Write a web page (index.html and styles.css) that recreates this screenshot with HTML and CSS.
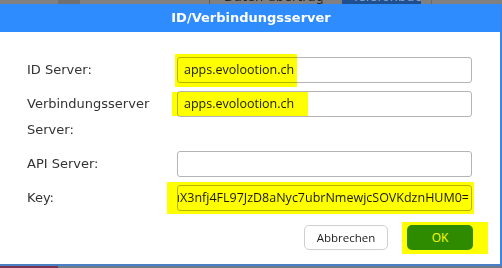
FILE: index.html
```html
<!DOCTYPE html>
<html>
<head>
    <title>ID/Verbindungsserver</title>
    <meta charset="utf-8">
    <link rel="stylesheet" href="styles.css">
</head>
<body>

    <div class="topbar">
        <div class="tab tab-first"></div>
        <div class="tab tab-dark"></div>
        <div class="tab tab-spacer"></div>
        <div class="tab tab-text"><span>Daten übertragen</span></div>
        <div class="tab tab-spacer2"></div>
        <div class="tab tab-active"><span>Telefonbuch</span></div>
        <div class="tab tab-last"></div>
    </div>

    <div class="dialog">
        <div class="dialog-title">ID/Verbindungsserver</div>
        <div class="dialog-body">
            <div class="form">
                <label>ID Server:</label>
                <div class="field">
                    <div class="input">apps.evolootion.ch</div>
                    <span class="mark mark-id"></span>
                </div>

                <label>Verbindungsserver Server:</label>
                <div class="field">
                    <div class="input">apps.evolootion.ch</div>
                    <span class="mark mark-conn"></span>
                </div>

                <label>API Server:</label>
                <div class="field">
                    <div class="input"></div>
                </div>

                <label>Key:</label>
                <div class="field">
                    <div class="input input-key"><span>QpuX3nfj4FL97JzD8aNyc7ubrNmewjcSOVKdznHUM0=</span></div>
                    <span class="mark mark-key"></span>
                </div>
            </div>

            <div class="actions">
                <button class="btn">Abbrechen</button>
                <div class="field">
                    <button class="btn btn-ok">OK</button>
                    <span class="mark mark-ok"></span>
                </div>
            </div>
        </div>
    </div>

    <div class="bottombar">
        <div class="bottom-left"></div>
    </div>

</body>
</html>
```

FILE: styles.css
```css
* {
    margin: 0;
    padding: 0;
    box-sizing: border-box;
}

body {
    background: #7f7f7f;
    width: 502px;
    height: 268px;
    overflow: hidden;
    font-family: "DejaVu Sans", Verdana, sans-serif;
}

/* strip of the app behind the dialog */
.topbar {
    display: flex;
    height: 4px;
    overflow: hidden;
    background: #808080;
}

.tab {
    height: 4px;
    overflow: hidden;
    font-size: 13px;
    line-height: 13px;
    white-space: nowrap;
}

.tab span {
    display: block;
    margin-top: -10px;
}

.tab-first { width: 58px; }
.tab-dark { width: 22px; background: #707070; }
.tab-spacer { width: 129px; }

.tab-text {
    width: 114px;
    border-left: 1px solid #5c5c5c;
    border-right: 1px solid #5c5c5c;
    padding-left: 14px;
    color: #222;
}

.tab-spacer2 { width: 19px; }

.tab-active {
    width: 79px;
    background: #1f4f8e;
    color: #8fa3c0;
    padding-left: 10px;
}

.tab-last {
    width: 11px;
    border-right: 1px solid #6a6a6a;
}

/* dialog */
.dialog {
    width: 502px;
    border-right: 2px solid #3a86e8;
    border-bottom: 2px solid #4a7fc4;
}

.dialog-title {
    height: 28px;
    background: #2f8cff;
    color: #fff;
    font-weight: bold;
    font-size: 13px;
    line-height: 28px;
    text-align: center;
    padding-left: 2px;
}

.dialog-body {
    height: 232px;
    background: #fff;
    padding: 25px 0 0 27px;
}

.form {
    display: grid;
    grid-template-columns: 150px 295px;
    row-gap: 8px;
}

.form label {
    font-size: 13px;
    line-height: 26px;
    color: #333;
    padding-right: 10px;
}

.field {
    position: relative;
}

.input {
    height: 26px;
    border: 1px solid #b4b4b4;
    border-radius: 3px;
    background: #fff;
    padding: 0 6px;
    font-family: "Open Sans", sans-serif;
    font-size: 12.5px;
    line-height: 24px;
    color: #1a1a1a;
    white-space: nowrap;
    overflow: hidden;
}

.input-key {
    display: flex;
    justify-content: flex-end;
    padding: 0 2px 0 0;
}

.input-key span {
    flex: none;
}

/* yellow highlighter marks */
.mark {
    position: absolute;
    background: #ffff00;
    mix-blend-mode: multiply;
}

.mark-id { left: -2px; top: -3px; width: 122px; height: 33px; }
.mark-conn { left: -5px; top: 1px; width: 136px; height: 24px; }
.mark-key { left: -10px; top: -3px; width: 307px; height: 32px; }
.mark-ok { left: -5px; top: -3px; width: 86px; height: 32px; }

.actions {
    display: flex;
    justify-content: flex-end;
    gap: 19px;
    width: 446px;
    margin-top: 14px;
}

.btn {
    display: block;
    width: 84px;
    height: 25px;
    border: 1px solid #cfcfcf;
    border-radius: 5px;
    background: #fff;
    font-family: "Open Sans", sans-serif;
    font-size: 11.5px;
    color: #222;
}

.btn-ok {
    width: 66px;
    border: none;
    background: #2e8b00;
    color: #fff;
    font-size: 12px;
}

.bottombar {
    display: flex;
    height: 2px;
    background: #6f7b8c;
}

.bottom-left {
    width: 58px;
    background: #7c3352;
}
```
